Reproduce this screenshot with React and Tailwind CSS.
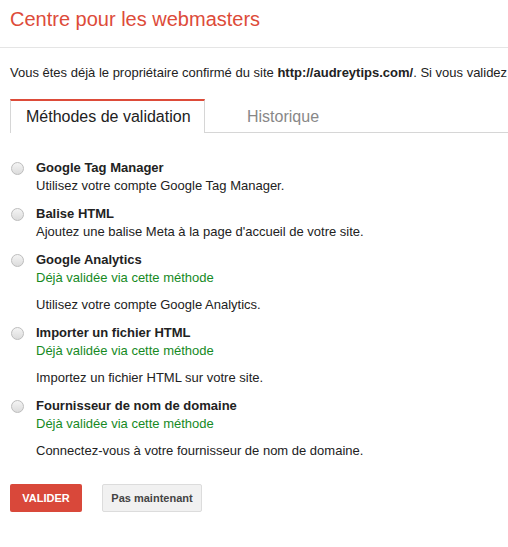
const METHODS = [
  { name: 'Google Tag Manager', desc: 'Utilisez votre compte Google Tag Manager.' },
  { name: 'Balise HTML', desc: "Ajoutez une balise Meta à la page d'accueil de votre site." },
  { name: 'Google Analytics', done: true, desc: 'Utilisez votre compte Google Analytics.' },
  { name: 'Importer un fichier HTML', done: true, desc: 'Importez un fichier HTML sur votre site.' },
  { name: 'Fournisseur de nom de domaine', done: true, desc: 'Connectez-vous à votre fournisseur de nom de domaine.' },
]

function Radio() {
  return (
    <span className="mt-[3px] block w-[13px] h-[13px] shrink-0 rounded-full border border-[#bdbdbd] bg-gradient-to-b from-[#f4f4f4] to-[#dcdcdc]" />
  )
}

export default function App() {
  return (
    <div className="w-[508px] h-[547px] overflow-hidden bg-white font-['Liberation_Sans',Arial,sans-serif] text-[13px] text-[#222]">
      {/* Header */}
      <div className="h-[48px] border-b border-[#e5e5e5] px-[10px] pt-[7px]">
        <h1 className="text-[20px] leading-[24px] text-[#dd4b39]">Centre pour les webmasters</h1>
      </div>

      <p className="pl-[10px] pt-[16px] whitespace-nowrap leading-[18px]">
        Vous êtes déjà le propriétaire confirmé du site <b>http://audreytips.com/</b>. Si vous validez
      </p>

      {/* Tabs */}
      <div className="mt-[17px] ml-[10px] flex h-[34px]">
        <div className="w-[195px] border-t-2 border-x border-t-[#dd4b39] border-x-[#d6d6d6] pl-[15px] pt-[5px] text-[16px] leading-[22px] text-[#222]">
          Méthodes de validation
        </div>
        <div className="flex-1 border-b border-[#d6d6d6] pl-[42px] pt-[7px] text-[16px] leading-[22px] text-[#888]">
          Historique
        </div>
      </div>

      {/* Methods */}
      <div className="mt-[26px] flex flex-col gap-[10px] pl-[11px]">
        {METHODS.map(m => (
          <div key={m.name} className="flex gap-[12px]">
            <Radio />
            <div className="leading-[18px]">
              <div className="font-bold text-[#222]">{m.name}</div>
              {m.done && <div className="text-[#168a1f] mb-[9px]">Déjà validée via cette méthode</div>}
              <div>{m.desc}</div>
            </div>
          </div>
        ))}
      </div>

      {/* Actions */}
      <div className="mt-[24px] ml-[10px] flex gap-[20px]">
        <button className="h-[28px] w-[72px] rounded-[2px] bg-[#d9483a] text-[11px] font-bold text-white">VALIDER</button>
        <button className="h-[28px] w-[100px] rounded-[2px] border border-[#dcdcdc] bg-[#f1f1f1] text-[11px] font-bold text-[#444]">Pas maintenant</button>
      </div>
    </div>
  )
}
